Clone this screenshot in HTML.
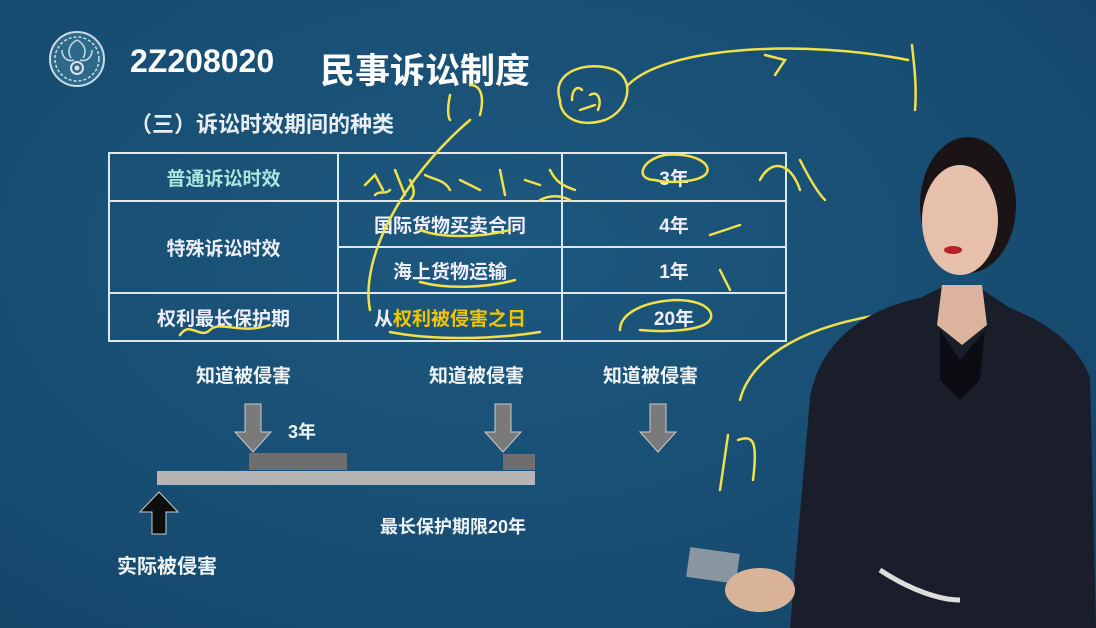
<!DOCTYPE html>
<html><head><meta charset="utf-8"><style>
body{margin:0;width:1096px;height:628px;overflow:hidden;background:radial-gradient(ellipse at 45% 40%,#1d587e 0%,#184d72 60%,#134368 100%);font-family:"Liberation Sans","Noto Sans CJK SC",sans-serif;color:#eef3f6;position:relative}
.a{position:absolute;white-space:nowrap}
table{position:absolute;left:108px;top:152px;border-collapse:collapse}
td{border:2px solid #dfe6ec;text-align:center;font-size:19px;color:#eef;padding:0;font-weight:bold}
</style></head><body>
<svg class="a" style="left:48px;top:30px" width="58" height="58" viewBox="0 0 58 58"><circle cx="29" cy="29" r="27" fill="#2d6a8a" stroke="#c9dbe6" stroke-width="2"/><circle cx="29" cy="29" r="22" fill="none" stroke="#c9dbe6" stroke-width="1.5" stroke-dasharray="3 2"/><g stroke="#c9dbe6" stroke-width="1.5" fill="none"><path d="M29 10c8 4 10 12 6 18M44 20c0 8-6 12-12 10M14 20c0 8 6 12 12 10M29 10c-8 4-10 12-6 18"/></g><circle cx="29" cy="38" r="6" fill="none" stroke="#dde" stroke-width="2"/><circle cx="29" cy="38" r="2.5" fill="#dde"/></svg>
<div class="a" style="left:130px;top:43px;font-size:32px;font-weight:bold;color:#fff">2Z208020</div>
<div class="a" style="left:320px;top:43px;font-size:35px;font-weight:bold;color:#fff">民事诉讼制度</div>
<div class="a" style="left:130px;top:107px;font-size:22px;color:#e8eef2;font-weight:bold">（三）诉讼时效期间的种类</div>
<table>
<tr style="height:48px"><td style="width:227px;color:#a8e6de">普通诉讼时效</td><td style="width:222px"></td><td style="width:222px">3年</td></tr>
<tr style="height:46px"><td rowspan="2">特殊诉讼时效</td><td>国际货物买卖合同</td><td>4年</td></tr>
<tr style="height:46px"><td>海上货物运输</td><td>1年</td></tr>
<tr style="height:48px"><td>权利最长保护期</td><td>从<span style="color:#f5c400">权利被侵害之日</span></td><td>20年</td></tr>
</table>
<div class="a" style="left:196px;top:361px;font-size:19px;font-weight:bold">知道被侵害</div>
<div class="a" style="left:429px;top:361px;font-size:19px;font-weight:bold">知道被侵害</div>
<div class="a" style="left:603px;top:361px;font-size:19px;font-weight:bold">知道被侵害</div>
<svg class="a" style="left:0;top:0" width="1096" height="628">
<g fill="#7a7a7a" stroke="#ccc" stroke-width="1"><path d="M245 404h16v28h10l-18 20-18-20h10z"/><path d="M495 404h16v28h10l-18 20-18-20h10z"/><path d="M650 404h16v28h10l-18 20-18-20h10z"/></g>
<rect x="249" y="453" width="98" height="17" fill="#6e6e6e"/><rect x="503" y="454" width="32" height="16" fill="#6e6e6e"/>
<rect x="157" y="471" width="378" height="14" fill="#b5b5b5"/>
<path d="M152 534v-22h-12l19-20 19 20h-12v22z" fill="#0d0d0d" stroke="#ccc"/>
<g fill="none" stroke="#f2e04a" stroke-width="2.5" stroke-linecap="round">
<path d="M560 100c-10-30 30-40 55-30 20 10 15 40-10 50-25 8-45-2-45-20"/>
<path d="M572 100c0-10 5-15 10-10M590 95c8-5 12 5 8 15M580 110l15-5"/>
<path d="M655 180c-20 0-15-20 10-25 30-3 50 10 40 20-10 8-40 8-50 5"/>
<path d="M620 330c0-15 20-28 55-30 30 0 40 12 35 20-8 12-50 12-70 10"/>
<path d="M628 85c40-40 180-45 280-25"/><path d="M912 45c2 20 5 40 3 65"/><path d="M765 55l20 5-10 15"/>
<path d="M470 120c-70 60-110 140-100 190"/><path d="M740 400c10-40 60-80 180-90"/>
<path d="M180 335c10-15 20 5 30-5 10-10 30 5 60-5"/>
<path d="M420 230c20 8 60 8 90 0"/><path d="M420 282c30 8 70 5 95-2"/><path d="M390 332c40 8 100 8 150 0"/>
<path d="M365 185l10-10 8 15M395 170l10 25M425 175c10 5 20 5 25 15M460 180l20 10M500 170l5 25M525 180l15 5M550 170c5 10 10 15 25 20"/>
<path d="M375 195c5-5 10 0 15-5M410 180c5 10 5 15 0 20M540 200c10-5 20-5 30 0"/>
<path d="M720 490l8-55M738 440c15-5 20 0 15 40"/><path d="M760 180c10-20 30-20 40 10M800 160c5 10 15 30 25 40"/>
<path d="M710 235l30-10M720 270l10 20"/><path d="M450 95c-2 10-3 20 0 25M470 85c10 0 15 10 10 30"/>
</g>
<!-- person -->
<path d="M790 628l20-230c10-60 60-90 110-100l20-10h40l30 20c40 15 70 40 80 70l6 250z" fill="#1a1e2b"/>
<path d="M940 330l20 30 25-30-5 50-20 20-20-20z" fill="#0c0d12"/>
<ellipse cx="968" cy="205" rx="48" ry="68" fill="#1a1416"/>
<ellipse cx="960" cy="220" rx="38" ry="55" fill="#e6c0aa"/>
<path d="M942 285h40l5 40-25 20-25-20z" fill="#dcb39c"/>
<ellipse cx="953" cy="250" rx="9" ry="4" fill="#b8202a"/>
<path d="M880 570c30 20 60 30 80 30" stroke="#ddd" stroke-width="5" fill="none"/>
<rect x="688" y="550" width="50" height="30" fill="#8a97a3" transform="rotate(8 710 565)"/>
<ellipse cx="760" cy="590" rx="35" ry="22" fill="#d9b29a"/>
</svg>
<div class="a" style="left:288px;top:418px;font-size:18px;font-weight:bold">3年</div>
<div class="a" style="left:380px;top:513px;font-size:18px;font-weight:bold">最长保护期限20年</div>
<div class="a" style="left:117px;top:550px;font-size:20px;font-weight:bold">实际被侵害</div>
</body></html>
